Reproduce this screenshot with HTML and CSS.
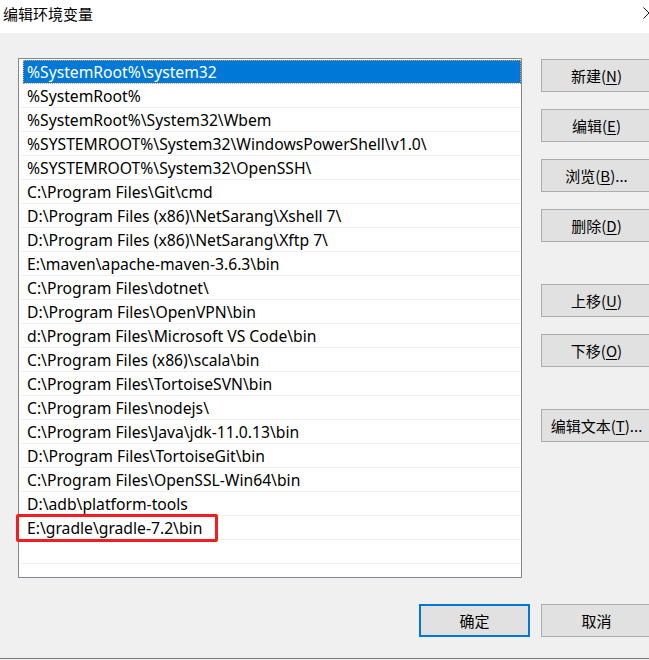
FILE: index.html
```html
<!DOCTYPE html>
<html lang="zh-CN">
<head>
<meta charset="utf-8">
<title>编辑环境变量</title>
<link rel="stylesheet" href="styles.css">
</head>
<body>
<div class="window">
  <div class="titlebar">
    <span class="title">编辑环境变量</span>
    <svg class="close" width="12" height="12" viewBox="0 0 12 12"><path d="M0.5 0.5 L11.5 11.5 M11.5 0.5 L0.5 11.5" stroke="#111" stroke-width="1" fill="none"/></svg>
  </div>
  <div class="body">
    <div class="main">
      <div class="listbox">
        <div class="row selected">%SystemRoot%\system32</div>
        <div class="row">%SystemRoot%</div>
        <div class="row">%SystemRoot%\System32\Wbem</div>
        <div class="row">%SYSTEMROOT%\System32\WindowsPowerShell\v1.0\</div>
        <div class="row">%SYSTEMROOT%\System32\OpenSSH\</div>
        <div class="row">C:\Program Files\Git\cmd</div>
        <div class="row">D:\Program Files (x86)\NetSarang\Xshell 7\</div>
        <div class="row">D:\Program Files (x86)\NetSarang\Xftp 7\</div>
        <div class="row">E:\maven\apache-maven-3.6.3\bin</div>
        <div class="row">C:\Program Files\dotnet\</div>
        <div class="row">D:\Program Files\OpenVPN\bin</div>
        <div class="row">d:\Program Files\Microsoft VS Code\bin</div>
        <div class="row">C:\Program Files (x86)\scala\bin</div>
        <div class="row">C:\Program Files\TortoiseSVN\bin</div>
        <div class="row">C:\Program Files\nodejs\</div>
        <div class="row">C:\Program Files\Java\jdk-11.0.13\bin</div>
        <div class="row">D:\Program Files\TortoiseGit\bin</div>
        <div class="row">C:\Program Files\OpenSSL-Win64\bin</div>
        <div class="row">D:\adb\platform-tools</div>
        <div class="row">E:\gradle\gradle-7.2\bin</div>
        <div class="row"></div>
        <div class="highlight"></div>
      </div>
      <div class="side">
        <div class="group">
          <button class="btn">新建(<u>N</u>)</button>
          <button class="btn">编辑(<u>E</u>)</button>
          <button class="btn">浏览(<u>B</u>)...</button>
          <button class="btn">删除(<u>D</u>)</button>
        </div>
        <div class="group move">
          <button class="btn">上移(<u>U</u>)</button>
          <button class="btn">下移(<u>O</u>)</button>
        </div>
        <div class="group text">
          <button class="btn">编辑文本(<u>T</u>)...</button>
        </div>
      </div>
    </div>
    <div class="footer">
      <button class="btn default">确定</button>
      <button class="btn">取消</button>
    </div>
  </div>
  <div class="bottomline"></div>
</div>
</body>
</html>
```

FILE: styles.css
```css
html, body {
  margin: 0;
  padding: 0;
}
body {
  width: 649px;
  height: 660px;
  overflow: hidden;
  background: #f0f0f0;
  font-family: "Noto Sans", "Noto Sans CJK SC", sans-serif;
  font-size: 15.7px;
  color: #000;
}
.window {
  position: relative;
  width: 649px;
  height: 660px;
  overflow: hidden;
}
.titlebar {
  position: relative;
  height: 33px;
  background: #fff;
  display: flex;
  align-items: flex-start;
}
.title {
  font-family: "Noto Sans CJK SC", sans-serif;
  font-size: 15px;
  line-height: 20px;
  padding: 4px 0 0 3px;
}
.close {
  position: absolute;
  left: 643px;
  top: 7px;
}
.body {
  padding: 25px 0 0 18px;
}
.main {
  display: flex;
  align-items: flex-start;
}
.listbox {
  position: relative;
  width: 502px;
  height: 517px;
  border: 1px solid #828790;
  background: #fff;
  padding: 1px 0 0 0;
  box-sizing: content-box;
  flex: none;
}
.row {
  height: 22px;
  line-height: 22px;
  padding-top: 1px;
  border-bottom: 1px solid #f0f0f0;
  padding-left: 8px;
  white-space: nowrap;
  overflow: hidden;
}
.row.selected {
  margin-left: 4px;
  padding-left: 4px;
  background: #0078d7;
  color: #fff;
  border-bottom-color: #fff;
  outline: 1px dotted #d9a35c;
  outline-offset: -1px;
}
.highlight {
  position: absolute;
  left: -3px;
  top: 455px;
  width: 196px;
  height: 22px;
  border: 3px solid #f31d1d;
  border-radius: 2px;
}
.side {
  margin-left: 19px;
  padding-top: 1px;
  display: flex;
  flex-direction: column;
}
.group {
  display: flex;
  flex-direction: column;
  gap: 17px;
}
.group.move {
  margin-top: 42px;
}
.group.text {
  margin-top: 42px;
}
.btn {
  width: 111px;
  height: 33px;
  flex: none;
  box-sizing: border-box;
  border: 1px solid #adadad;
  background: #e1e1e1;
  font-family: "Noto Sans CJK SC", sans-serif;
  font-size: 15px;
  color: #000;
  padding: 0;
  margin: 0;
  line-height: 20px;
}
.btn u {
  text-decoration-thickness: 1px;
  text-underline-offset: 2px;
}
.btn.default {
  border: 2px solid #0078d7;
}
.footer {
  display: flex;
  gap: 11px;
  margin-top: 26px;
  margin-left: 401px;
}
.bottomline {
  position: absolute;
  left: 0;
  top: 658px;
  width: 649px;
  height: 1px;
  background: #7a7a7a;
}
```
